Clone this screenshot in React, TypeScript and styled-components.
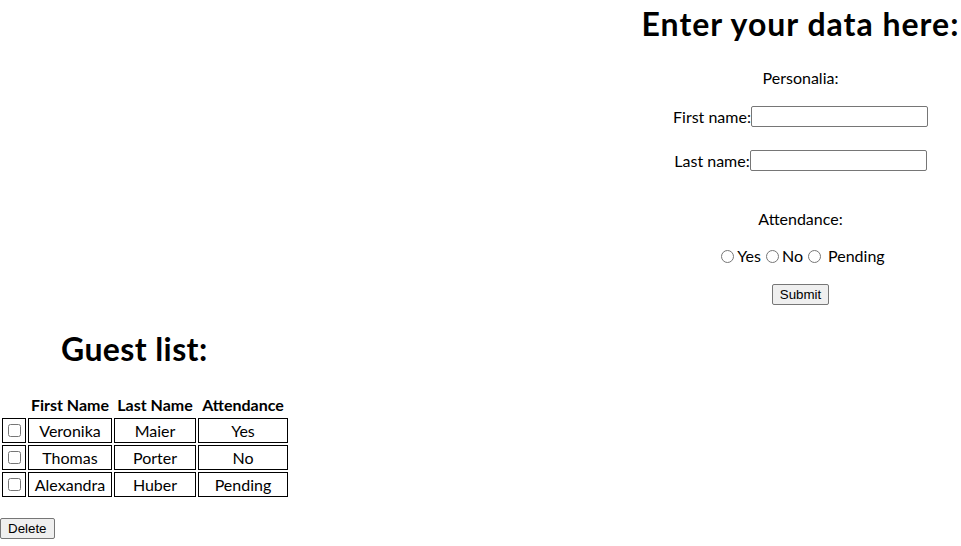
import React, { useState } from 'react';
import styled, { createGlobalStyle } from 'styled-components';

type Attendance = 'Yes' | 'No' | 'Pending';

interface Guest {
  id: number;
  firstName: string;
  lastName: string;
  attendance: Attendance;
}

const initialGuests: Guest[] = [
  { id: 1, firstName: 'Veronika', lastName: 'Maier', attendance: 'Yes' },
  { id: 2, firstName: 'Thomas', lastName: 'Porter', attendance: 'No' },
  { id: 3, firstName: 'Alexandra', lastName: 'Huber', attendance: 'Pending' },
];

const GlobalStyle = createGlobalStyle`
  body {
    margin: 0;
    background: #ffffff;
    color: #000000;
    font-family: Lato, "Open Sans", sans-serif;
    font-size: 16px;
  }
`;

const App: React.FC = () => {
  const [guests, setGuests] = useState<Guest[]>(initialGuests);
  const [selected, setSelected] = useState<number[]>([]);
  const [firstName, setFirstName] = useState<string>('');
  const [lastName, setLastName] = useState<string>('');
  const [attendance, setAttendance] = useState<Attendance | ''>('');

  const handleSubmit = (e: React.FormEvent) => {
    e.preventDefault();
    if (!firstName || !lastName || !attendance) return;
    setGuests([...guests, { id: Date.now(), firstName, lastName, attendance }]);
    setFirstName('');
    setLastName('');
    setAttendance('');
  };

  const toggleSelected = (id: number) => {
    setSelected(prev => prev.includes(id) ? prev.filter(x => x !== id) : [...prev, id]);
  };

  const handleDelete = () => {
    setGuests(guests.filter(g => !selected.includes(g.id)));
    setSelected([]);
  };

  return (
    <Page>
      <GlobalStyle />
      <TopRow>
        <FormPanel onSubmit={handleSubmit}>
          <Heading>Enter your data here:</Heading>
          <Caption>Personalia:</Caption>
          <FieldRow $top={18}>
            <span>First name:</span>
            <TextInput value={firstName} onChange={e => setFirstName(e.target.value)} />
          </FieldRow>
          <FieldRow $top={23}>
            <span>Last name:</span>
            <TextInput value={lastName} onChange={e => setLastName(e.target.value)} />
          </FieldRow>
          <Caption $top={38}>Attendance:</Caption>
          <RadioRow>
            <Radio name="attendance" checked={attendance === 'Yes'} onChange={() => setAttendance('Yes')} />Yes
            <Radio name="attendance" checked={attendance === 'No'} onChange={() => setAttendance('No')} />No
            <Radio name="attendance" checked={attendance === 'Pending'} onChange={() => setAttendance('Pending')} /> Pending
          </RadioRow>
          <ButtonRow>
            <NativeButton type="submit">Submit</NativeButton>
          </ButtonRow>
        </FormPanel>
      </TopRow>

      <GuestSection>
        <ListHeading>Guest list:</ListHeading>
        <GuestTable>
          <thead>
            <tr>
              <HeadCell />
              <HeadCell>First Name</HeadCell>
              <HeadCell>Last Name</HeadCell>
              <HeadCell>Attendance</HeadCell>
            </tr>
          </thead>
          <tbody>
            {guests.map(g => (
              <tr key={g.id}>
                <CheckCell>
                  <Checkbox checked={selected.includes(g.id)} onChange={() => toggleSelected(g.id)} />
                </CheckCell>
                <Cell $width={80}>{g.firstName}</Cell>
                <Cell $width={78}>{g.lastName}</Cell>
                <Cell $width={86}>{g.attendance}</Cell>
              </tr>
            ))}
          </tbody>
        </GuestTable>
        <DeleteRow>
          <NativeButton type="button" onClick={handleDelete}>Delete</NativeButton>
        </DeleteRow>
      </GuestSection>
    </Page>
  );
};

const Page = styled.div`
  display: flex;
  flex-direction: column;
  width: 961px;
`;

const TopRow = styled.div`
  display: flex;
  justify-content: flex-end;
`;

const FormPanel = styled.form`
  width: 321px;
  display: flex;
  flex-direction: column;
  align-items: center;
  text-align: center;
`;

const Heading = styled.h1`
  margin: 4px 0 0;
  font-size: 32px;
  line-height: 40px;
  font-weight: 700;
  letter-spacing: 1px;
  white-space: nowrap;
`;

const Caption = styled.p<{ $top?: number }>`
  margin: ${p => p.$top ?? 24}px 0 0;
  font-size: 16px;
  line-height: 20px;
`;

const FieldRow = styled.div<{ $top: number }>`
  margin-top: ${p => p.$top}px;
  display: flex;
  align-items: center;
  height: 21px;
  font-size: 16px;
  line-height: 18px;
`;

const TextInput = styled.input.attrs({ type: 'text' })`
  box-sizing: border-box;
  width: 177px;
  height: 21px;
  margin: 0;
  padding: 1px 2px;
  border: 1px solid #767676;
  border-radius: 2px;
  font-family: "Liberation Sans", Arial, sans-serif;
  font-size: 13.33px;
  outline: none;
`;

const RadioRow = styled.div`
  margin-top: 17px;
  font-size: 16px;
  line-height: 20px;
  white-space: pre;
`;

const Radio = styled.input.attrs({ type: 'radio' })`
  width: 13px;
  height: 13px;
  margin: 3px 3px 0 5px;
  vertical-align: -1px;
`;

const ButtonRow = styled.div`
  margin-top: 18px;
  display: flex;
  justify-content: center;
`;

const NativeButton = styled.button`
  box-sizing: border-box;
  height: 21px;
  padding: 1px 7px;
  margin: 0;
  background: #efefef;
  color: #000000;
  border: 1px solid #767676;
  border-radius: 2px;
  font-family: "Liberation Sans", Arial, sans-serif;
  font-size: 13.33px;
  line-height: 17px;
  cursor: pointer;

  &:hover {
    background: #e5e5e5;
  }
`;

const GuestSection = styled.section`
  display: flex;
  flex-direction: column;
  align-items: flex-start;
`;

const ListHeading = styled.h1`
  margin: 24px 0 0 61px;
  font-size: 32px;
  line-height: 40px;
  font-weight: 700;
  letter-spacing: 0.4px;
`;

const GuestTable = styled.table`
  margin-top: 22px;
  border-collapse: separate;
  border-spacing: 2px;
  font-size: 16px;
  line-height: 21px;
`;

const HeadCell = styled.th`
  padding: 1px;
  font-weight: 700;
  white-space: nowrap;
`;

const Cell = styled.td<{ $width: number }>`
  box-sizing: content-box;
  width: ${p => p.$width}px;
  height: 21px;
  padding: 1px;
  border: 1px solid #000000;
  text-align: center;
  white-space: nowrap;
`;

const CheckCell = styled.td`
  width: 20px;
  height: 21px;
  padding: 1px;
  border: 1px solid #000000;
  text-align: center;
  line-height: 0;
`;

const Checkbox = styled.input.attrs({ type: 'checkbox' })`
  width: 13px;
  height: 13px;
  margin: 0 0 0 1px;
  vertical-align: middle;
`;

const DeleteRow = styled.div`
  margin-top: 18px;
`;

export default App;
